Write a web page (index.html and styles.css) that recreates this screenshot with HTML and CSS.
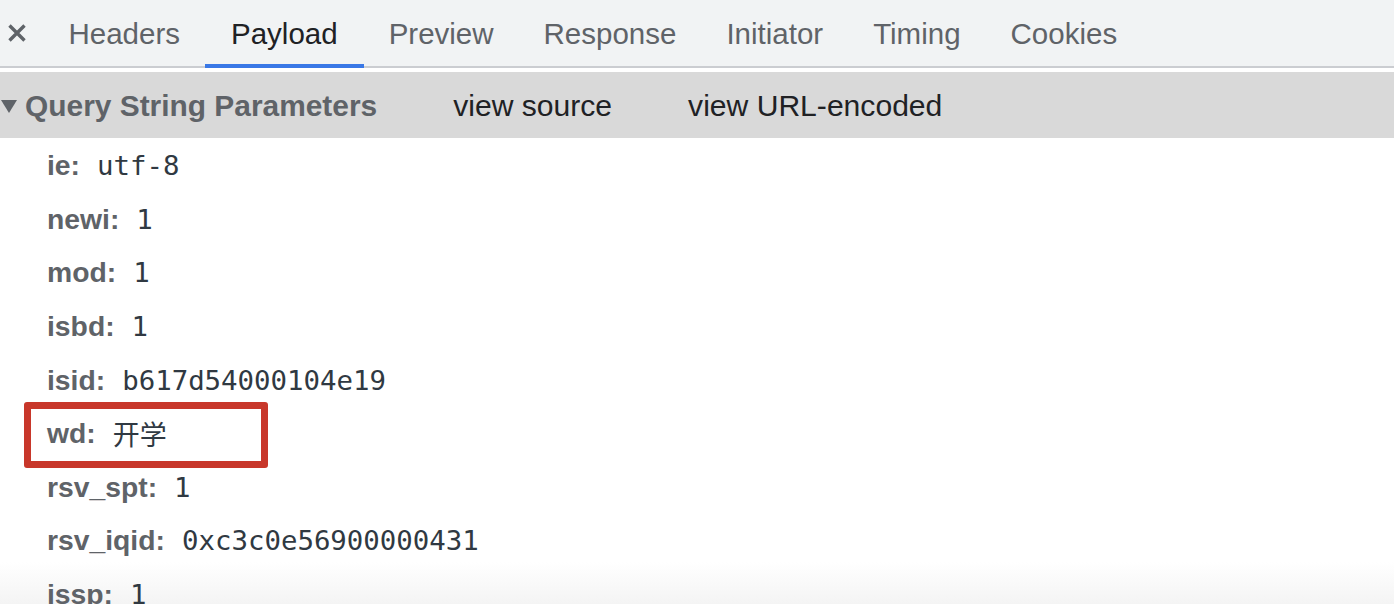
FILE: index.html
```html
<!DOCTYPE html>
<html lang="zh-CN">
<head>
<meta charset="utf-8">
<title>Payload</title>
<link rel="stylesheet" href="styles.css">
</head>
<body>
<div class="panel">
  <div class="tabbar">
    <div class="close">
      <svg width="18" height="18" viewBox="0 0 18 18"><path d="M1.5 1.5 L16.5 16.5 M16.5 1.5 L1.5 16.5" stroke="#5f6368" stroke-width="3.4" stroke-linecap="butt"/></svg>
    </div>
    <div class="tab">Headers</div>
    <div class="tab active">Payload</div>
    <div class="tab">Preview</div>
    <div class="tab">Response</div>
    <div class="tab">Initiator</div>
    <div class="tab">Timing</div>
    <div class="tab">Cookies</div>
  </div>
  <div class="section-head">
    <span class="tri"></span>
    <span class="title">Query String Parameters</span>
    <span class="link">view source</span>
    <span class="link">view URL-encoded</span>
  </div>
  <div class="params">
    <div class="row"><span class="key">ie:</span><span class="val">utf-8</span></div>
    <div class="row"><span class="key">newi:</span><span class="val">1</span></div>
    <div class="row"><span class="key">mod:</span><span class="val">1</span></div>
    <div class="row"><span class="key">isbd:</span><span class="val">1</span></div>
    <div class="row"><span class="key">isid:</span><span class="val">b617d54000104e19</span></div>
    <div class="row marked"><span class="key">wd:</span><span class="val cjk">开学</span><span class="mark"></span></div>
    <div class="row"><span class="key">rsv_spt:</span><span class="val">1</span></div>
    <div class="row"><span class="key">rsv_iqid:</span><span class="val">0xc3c0e56900000431</span></div>
    <div class="row"><span class="key">issp:</span><span class="val">1</span></div>
  </div>
</div>
</body>
</html>
```

FILE: styles.css
```css
html, body {
  margin: 0;
  padding: 0;
  background: #ffffff;
  overflow: hidden;
}
body {
  font-family: "Liberation Sans", Arial, sans-serif;
}
.panel {
  width: 1394px;
  height: 604px;
  overflow: hidden;
  background: linear-gradient(to bottom, #ffffff 0, #ffffff 562px, #f4f4f4 604px);
}
.tabbar {
  display: flex;
  align-items: stretch;
  height: 68px;
  box-sizing: border-box;
  background: #f1f3f4;
  border-bottom: 2px solid #cbcdd1;
}
.close {
  width: 43.5px;
  display: flex;
  align-items: flex-start;
  padding-top: 24px;
  padding-left: 8px;
  box-sizing: border-box;
}
.tab {
  padding: 4px 25px 0;
  font-size: 29.5px;
  color: #5f6368;
  display: flex;
  align-items: center;
  box-sizing: border-box;
  margin-bottom: -2px;
  border-bottom: 4px solid transparent;
  height: 68px;
}
.tab:first-of-type {
  padding-left: 25.5px;
}
.tab.active {
  color: #202124;
  border-bottom-color: #3a78e6;
  padding-left: 26px;
  padding-right: 26px;
}
.section-head {
  margin-top: 4px;
  height: 66px;
  background: #d9d9d9;
  display: flex;
  align-items: center;
  padding-top: 2px;
  box-sizing: border-box;
}
.tri {
  width: 0;
  height: 0;
  margin-left: 1px;
  border-left: 8px solid transparent;
  border-right: 8px solid transparent;
  border-top: 13px solid #5f6368;
  margin-right: 8px;
}
.title {
  font-weight: bold;
  font-size: 29.9px;
  color: #5f6368;
  margin-right: 76px;
}
.link {
  font-size: 30.1px;
  color: #202124;
  margin-right: 76px;
}
.params {
  padding-left: 47px;
}
.row {
  position: relative;
  height: 53.6px;
  display: flex;
  align-items: center;
  gap: 17px;
  padding-top: 2px;
  box-sizing: border-box;
}
.key {
  font-weight: bold;
  font-size: 28.3px;
  color: #5f6368;
}
.val {
  font-family: "DejaVu Sans Mono", Menlo, monospace;
  font-size: 27.4px;
  color: #303942;
}
.val.cjk {
  font-family: "Noto Sans CJK SC", sans-serif;
  font-size: 27px;
  color: #303942;
}
.mark {
  position: absolute;
  left: -23px;
  top: -4px;
  width: 244px;
  height: 66px;
  box-sizing: border-box;
  border: 7px solid #c8372a;
  border-radius: 3px;
}
```
